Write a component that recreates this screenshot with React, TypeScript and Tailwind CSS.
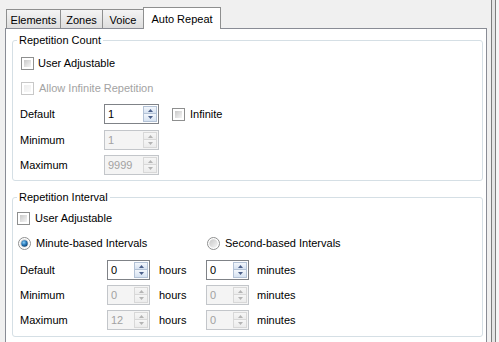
import { useId } from "react";

const font = "font-['Liberation_Sans',Arial,sans-serif]";

function Check({ disabled = false }: { disabled?: boolean }) {
  return (
    <div
      className={`w-[13px] h-[13px] shrink-0 border p-[2px] bg-white ${
        disabled ? "border-[#c8c8c8]" : "border-[#8e8f8f]"
      }`}
    >
      <div
        className={`w-full h-full bg-linear-to-br ${
          disabled ? "from-[#ededed] to-[#f9f9f9]" : "from-[#c9c9c9] to-[#f6f6f6]"
        }`}
      />
    </div>
  );
}

function Radio({ on = false }: { on?: boolean }) {
  const id = useId().replace(/:/g, "");
  return (
    <svg width="13" height="13" viewBox="0 0 13 13" className="shrink-0">
      <defs>
        <linearGradient id={`g${id}`} x1="0" y1="0" x2="1" y2="1">
          <stop offset="0" stopColor="#c6c6c6" />
          <stop offset="1" stopColor="#f7f7f7" />
        </linearGradient>
        <radialGradient id={`d${id}`} cx="0.4" cy="0.35" r="0.7">
          <stop offset="0" stopColor="#8fd0f5" />
          <stop offset="0.5" stopColor="#2a7dbf" />
          <stop offset="1" stopColor="#0d3d6b" />
        </radialGradient>
      </defs>
      <circle cx="6.5" cy="6.5" r="6" fill="#fff" stroke="#8e8f8f" />
      <circle cx="6.5" cy="6.5" r="4.3" fill={`url(#g${id})`} />
      {on && <circle cx="6.5" cy="6.5" r="3.2" fill={`url(#d${id})`} />}
    </svg>
  );
}

function Arrow({ up, disabled }: { up?: boolean; disabled?: boolean }) {
  const c = disabled ? "#b4b4b4" : "#4a5f8a";
  return (
    <svg width="5" height="3" viewBox="0 0 5 3">
      <polygon points={up ? "0,3 2.5,0 5,3" : "0,0 5,0 2.5,3"} fill={c} />
    </svg>
  );
}

function Spin({
  value,
  wide = false,
  disabled = false,
}: {
  value: string;
  wide?: boolean;
  disabled?: boolean;
}) {
  const btn = disabled
    ? "border-[#d8d8d8] from-[#f6f6f6] to-[#ececec]"
    : "border-[#b3c2d6] from-[#f3f7fc] to-[#d6e2f1]";
  return (
    <div
      className={`flex h-[20px] shrink-0 border ${wide ? "w-[55px]" : "w-[43px]"} ${
        disabled ? "border-[#c3c6ca] bg-[#f4f4f4]" : "border-[#7f8287] bg-white"
      }`}
    >
      <div
        className={`flex-1 pl-[3px] leading-[18px] ${
          disabled ? "text-[#a2a2a2]" : "text-black"
        }`}
      >
        {value}
      </div>
      <div className="flex w-[15px] flex-col py-[1px] pr-[1px]">
        <div className={`flex h-[8px] items-center justify-center border bg-linear-to-b ${btn}`}>
          <Arrow up disabled={disabled} />
        </div>
        <div className={`flex h-[8px] items-center justify-center border border-t-0 bg-linear-to-b ${btn}`}>
          <Arrow disabled={disabled} />
        </div>
      </div>
    </div>
  );
}

function Tab({ label, first = false }: { label: string; first?: boolean }) {
  return (
    <div
      className={`flex h-[19px] items-center justify-center border border-b-0 border-[#8e8f8f] bg-linear-to-b from-[#f4f4f4] to-[#dedede] pt-[2px] ${
        first ? "" : "-ml-[1px]"
      } ${label === "Elements" ? "w-[55px]" : label === "Zones" ? "w-[43px]" : "w-[42px]"}`}
    >
      {label}
    </div>
  );
}

function Row1({ label, value, disabled, children }: { label: string; value: string; disabled?: boolean; children?: React.ReactNode }) {
  return (
    <div className="flex h-[20px] items-center">
      <div className="ml-[7px] w-[84px]">{label}</div>
      <Spin value={value} wide disabled={disabled} />
      {children}
    </div>
  );
}

function Row2({ label, h, m, disabled }: { label: string; h: string; m: string; disabled?: boolean }) {
  return (
    <div className="flex h-[20px] items-center">
      <div className="ml-[7px] w-[87px]">{label}</div>
      <Spin value={h} disabled={disabled} />
      <div className="ml-[9px] w-[47px]">hours</div>
      <Spin value={m} disabled={disabled} />
      <div className="ml-[8px]">minutes</div>
    </div>
  );
}

export default function App() {
  return (
    <div className={`flex h-[342px] w-[499px] overflow-hidden bg-[#f0f0f0] text-[11px] text-black ${font}`}>
      <div className="ml-[5px] flex w-[482px] flex-col pt-[7px]">
        <div className="flex h-[21px] items-end pl-[1px]">
          <Tab label="Elements" first />
          <Tab label="Zones" />
          <Tab label="Voice" />
          <div className="relative z-10 -mb-[1px] -ml-[1px] flex h-[22px] w-[78px] items-start justify-center border border-b-0 border-[#8e8f8f] bg-white pt-[3px]">
            Auto Repeat
          </div>
        </div>
        <div className="flex-1 border border-b-0 border-[#898c95] bg-white">
          <fieldset className="mt-[4px] ml-[6px] w-[471px] rounded-[3px] border border-[#d5dfe5] pb-[5px]">
            <legend className="ml-[4px] px-[2px] leading-[14px]">Repetition Count</legend>
            <div className="mt-[7px] flex h-[18px] items-center">
              <div className="ml-[8px]"><Check /></div>
              <div className="ml-[4px]">User Adjustable</div>
            </div>
            <div className="mt-[7px] flex h-[18px] items-center">
              <div className="ml-[8px]"><Check disabled /></div>
              <div className="ml-[5px] text-[#a3a3a3]">Allow Infinite Repetition</div>
            </div>
            <div className="mt-[7px]">
              <Row1 label="Default" value="1">
                <div className="ml-[13px]"><Check /></div>
                <div className="ml-[5px]">Infinite</div>
              </Row1>
            </div>
            <div className="mt-[6px]">
              <Row1 label="Minimum" value="1" disabled />
            </div>
            <div className="mt-[5px]">
              <Row1 label="Maximum" value="9999" disabled />
            </div>
          </fieldset>
          <fieldset className="mt-[9px] ml-[6px] w-[471px] rounded-[3px] border border-[#d5dfe5] pb-[6px]">
            <legend className="ml-[4px] px-[2px] leading-[14px]">Repetition Interval</legend>
            <div className="mt-[5px] flex h-[18px] items-center">
              <div className="ml-[4px]"><Check /></div>
              <div className="ml-[5px]">User Adjustable</div>
            </div>
            <div className="mt-[7px] flex h-[18px] items-center">
              <div className="ml-[5px] flex w-[189px] items-center">
                <Radio on />
                <div className="ml-[5px]">Minute-based Intervals</div>
              </div>
              <Radio />
              <div className="ml-[5px]">Second-based Intervals</div>
            </div>
            <div className="mt-[8px]">
              <Row2 label="Default" h="0" m="0" />
            </div>
            <div className="mt-[5px]">
              <Row2 label="Minimum" h="0" m="0" disabled />
            </div>
            <div className="mt-[5px]">
              <Row2 label="Maximum" h="12" m="0" disabled />
            </div>
          </fieldset>
        </div>
      </div>
      <div className="w-[4px]" />
      <div className="w-[1px] bg-[#7d7d7d]" />
      <div className="w-[3px] bg-[#e4e4e4]" />
      <div className="w-[1px] bg-[#7d7d7d]" />
      <div className="flex-1 bg-[#f5f5f5]" />
    </div>
  );
}
